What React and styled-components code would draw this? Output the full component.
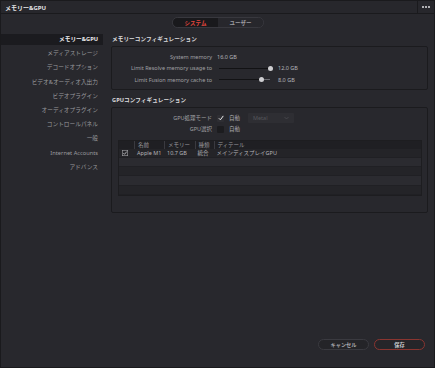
import styled, { createGlobalStyle } from "styled-components"

const Global = createGlobalStyle`
  html, body {
    margin: 0;
    padding: 0;
    background: #28282d;
  }
  * {
    box-sizing: border-box;
  }
`

const Window = styled.div`
  width: 435px;
  height: 368px;
  background: #28282d;
  border: 1px solid #1a1a1d;
  display: flex;
  flex-direction: column;
  font-family: "Noto Sans", "Noto Sans CJK JP", sans-serif;
  color: #a4a4a8;
  font-size: 5.5px;
  overflow: hidden;
`

const TitleBar = styled.div`
  height: 13px;
  flex: none;
  display: flex;
  align-items: center;
  border-bottom: 1px solid #1a1a1d;
  background: #27272c;
`

const Title = styled.div`
  flex: 1;
  padding-left: 4px;
  color: #e4e4e6;
  font-weight: 700;
  font-size: 6px;
`

const MoreButton = styled.div`
  width: 17px;
  height: 100%;
  border-left: 1px solid #1a1a1d;
  display: flex;
  align-items: center;
  justify-content: center;
  gap: 1px;
`

const Dot = styled.span`
  width: 2px;
  height: 2px;
  background: #b0b0b4;
`

const TabRow = styled.div`
  display: flex;
  justify-content: center;
  margin-top: 3px;
  padding-left: 1px;
`

const TabPill = styled.div`
  display: flex;
  height: 11px;
  border: 1px solid #38383e;
  border-radius: 6px;
  overflow: hidden;
`

const Tab = styled.div`
  width: 45px;
  display: flex;
  align-items: center;
  justify-content: center;
  font-weight: 700;
  font-size: 5.5px;
  background: ${(p) => (p.active ? "#19191c" : "#27272c")};
  color: ${(p) => (p.active ? "#e5473e" : "#9c9ca0")};
`

const Body = styled.div`
  flex: 1;
  display: flex;
  margin-top: 6px;
`

const Sidebar = styled.div`
  width: 102px;
  flex: none;
  display: flex;
  flex-direction: column;
  gap: 3.2px;
`

const NavItem = styled.div`
  height: 11px;
  line-height: 11px;
  text-align: right;
  padding-right: 5px;
  white-space: nowrap;
  font-size: 5.7px;
  background: ${(p) => (p.active ? "#1b1b1f" : "transparent")};
  color: ${(p) => (p.active ? "#ececee" : "#9a9a9e")};
  font-weight: ${(p) => (p.active ? 700 : 400)};
`

const Main = styled.div`
  flex: 1;
  display: flex;
  flex-direction: column;
  padding: 0 6px 0 8px;
`

const SectionTitle = styled.div`
  height: 11px;
  line-height: 11px;
  padding-left: 1px;
  color: #dcdcde;
  font-weight: 700;
  font-size: 5.6px;
  letter-spacing: 0.1px;
`

const Box = styled.div`
  margin-top: ${(p) => p.gap || 0}px;
  border: 1px solid #1b1b1e;
  border-radius: 2px;
  padding: ${(p) => p.pad};
  display: flex;
  flex-direction: column;
  margin-bottom: 5px;
`

const FieldRow = styled.div`
  height: ${(p) => p.h || 11.5}px;
  display: flex;
  align-items: center;
`

const Label = styled.div`
  width: ${(p) => p.w || 100}px;
  flex: none;
  text-align: right;
  white-space: nowrap;
  color: #a0a0a4;
`

const Value = styled.div`
  margin-left: ${(p) => p.gap || 5}px;
  color: #b4b4b8;
  white-space: nowrap;
`

const SliderTrack = styled.div`
  position: relative;
  margin-left: 7px;
  width: 51px;
  height: 1px;
  background: #6a6a70;
`

const SliderFill = styled.div`
  height: 1px;
  background: #121214;
`

const Knob = styled.div`
  position: absolute;
  top: -2px;
  width: 5px;
  height: 5px;
  margin-left: -2.5px;
  border-radius: 50%;
  background: #cfcfd2;
`

const CheckBox = styled.div`
  width: 7px;
  height: 7px;
  margin-left: 5px;
  flex: none;
  border-radius: 1px;
  background: ${(p) => (p.checked ? "#2e2e33" : "#1c1c1f")};
  display: flex;
  align-items: center;
  justify-content: center;
`

const CheckText = styled.span`
  margin-left: 5px;
  color: #b0b0b4;
`

const Select = styled.div`
  margin-left: 8px;
  width: 46px;
  height: 10px;
  background: #2e2e33;
  border-radius: 1px;
  display: flex;
  align-items: center;
  justify-content: space-between;
  padding: 0 5px;
  color: #56565c;
`

const Table = styled.div`
  margin-top: 4px;
  border: 1px solid #1d1d20;
  display: flex;
  flex-direction: column;
`

const TRow = styled.div`
  display: grid;
  grid-template-columns: 15px 30px 30.5px 19px 1fr;
  height: ${(p) => (p.head ? 8 : 9.3)}px;
  align-items: center;
  background: ${(p) => (p.head ? "#1f1f23" : p.alt ? "#2b2b30" : "#242428")};
  border-bottom: ${(p) => (p.head ? "none" : "1px solid #202024")};
  color: ${(p) => (p.head ? "#9a9a9e" : "#b4b4b8")};
`

const Cell = styled.div`
  height: 100%;
  display: flex;
  align-items: center;
  padding-left: ${(p) => p.pl ?? 3}px;
  white-space: nowrap;
  overflow: hidden;
  border-left: ${(p) => (p.sep ? "1px solid #3a3a40" : "none")};
`

const Footer = styled.div`
  flex: none;
  height: 28px;
  display: flex;
  justify-content: flex-end;
  align-items: flex-start;
  gap: 5px;
  padding: 0 9px 0 0;
`

const Button = styled.div`
  width: 51px;
  height: 11px;
  border-radius: 6px;
  display: flex;
  align-items: center;
  justify-content: center;
  font-weight: 700;
  font-size: 5.2px;
  background: ${(p) => (p.primary ? "#252529" : "#242428")};
  border: 1px solid ${(p) => (p.primary ? "#8a3530" : "#3a3a40")};
  color: ${(p) => (p.primary ? "#c8c8cc" : "#a6a6aa")};
`

const Check = ({ size = 6 }) => (
  <svg width={size} height={size} viewBox="0 0 10 10">
    <path d="M1.5 5.5 L4 8 L8.8 1.5" fill="none" stroke="#f2f2f2" strokeWidth="1.6" />
  </svg>
)

const navItems = [
  "メモリー&GPU",
  "メディアストレージ",
  "デコードオプション",
  "ビデオ&オーディオ入出力",
  "ビデオプラグイン",
  "オーディオプラグイン",
  "コントロールパネル",
  "一般",
  "Internet Accounts",
  "アドバンス",
]

function Slider({ pos }) {
  return (
    <SliderTrack>
      <SliderFill style={{ width: pos + "%" }} />
      <Knob style={{ left: pos + "%" }} />
    </SliderTrack>
  )
}

export default function App() {
  return (
    <>
      <Global />
      <Window>
        <TitleBar>
          <Title>メモリー&GPU</Title>
          <MoreButton>
            <Dot />
            <Dot />
            <Dot />
          </MoreButton>
        </TitleBar>

        <TabRow>
          <TabPill>
            <Tab active>システム</Tab>
            <Tab>ユーザー</Tab>
          </TabPill>
        </TabRow>

        <Body>
          <Sidebar>
            {navItems.map((item, i) => (
              <NavItem key={item} active={i === 0}>
                {item}
              </NavItem>
            ))}
          </Sidebar>

          <Main>
            <SectionTitle>メモリーコンフィギュレーション</SectionTitle>
            <Box gap={1} pad="4px 0 3px 0">
              <FieldRow>
                <Label>System memory</Label>
                <Value>16.0 GB</Value>
              </FieldRow>
              <FieldRow>
                <Label>Limit Resolve memory usage to</Label>
                <Slider pos={100} />
                <Value gap={8}>12.0 GB</Value>
              </FieldRow>
              <FieldRow>
                <Label>Limit Fusion memory cache to</Label>
                <Slider pos={84} />
                <Value gap={8}>8.0 GB</Value>
              </FieldRow>
            </Box>

            <SectionTitle>GPUコンフィギュレーション</SectionTitle>
            <Box gap={1} pad="6px 5px 16px 6px">
              <FieldRow h={9}>
                <Label w={94}>GPU処理モード</Label>
                <CheckBox checked>
                  <Check />
                </CheckBox>
                <CheckText>自動</CheckText>
                <Select>
                  <span>Metal</span>
                  <svg width="5" height="4" viewBox="0 0 10 6">
                    <path d="M1 1 L5 5 L9 1" fill="none" stroke="#56565c" strokeWidth="1.2" />
                  </svg>
                </Select>
              </FieldRow>
              <FieldRow h={13}>
                <Label w={94}>GPU選択</Label>
                <CheckBox />
                <CheckText>自動</CheckText>
              </FieldRow>

              <Table>
                <TRow head>
                  <Cell pl={0} />
                  <Cell sep>名前</Cell>
                  <Cell sep>メモリー</Cell>
                  <Cell sep>種類</Cell>
                  <Cell sep>ディテール</Cell>
                </TRow>
                <TRow>
                  <Cell pl={3}>
                    <svg width="6" height="6" viewBox="0 0 10 10">
                      <rect x="0.5" y="0.5" width="9" height="9" fill="none" stroke="#a0a0a4" strokeWidth="1" />
                      <path d="M2.2 5.2 L4.2 7.2 L8 2.6" fill="none" stroke="#d0d0d4" strokeWidth="1.3" />
                    </svg>
                  </Cell>
                  <Cell>Apple M1</Cell>
                  <Cell>10.7 GB</Cell>
                  <Cell>統合</Cell>
                  <Cell>メインディスプレイGPU</Cell>
                </TRow>
                <TRow alt />
                <TRow />
                <TRow alt />
                <TRow />
              </Table>
            </Box>
          </Main>
        </Body>

        <Footer>
          <Button>キャンセル</Button>
          <Button primary>保存</Button>
        </Footer>
      </Window>
    </>
  )
}
